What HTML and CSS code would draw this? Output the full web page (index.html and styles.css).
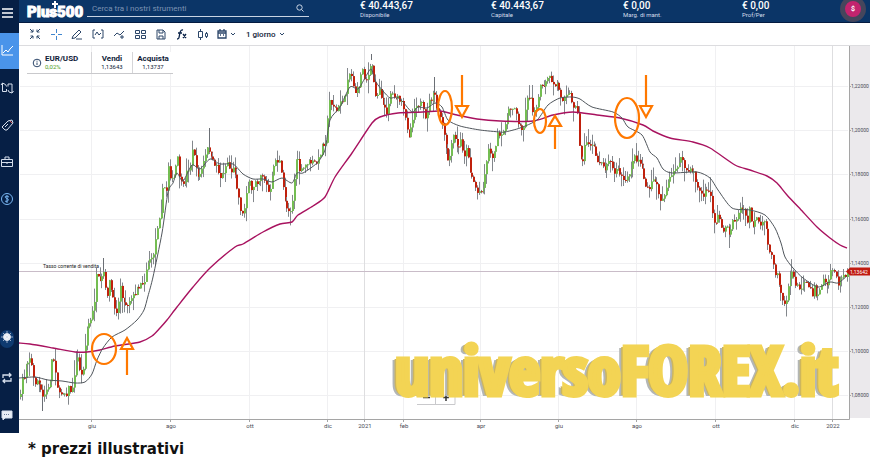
FILE: index.html
```html
<!DOCTYPE html>
<html lang="it">
<head>
    <meta charset="UTF-8">
    <meta name="viewport" content="width=device-width, initial-scale=1.0">
    <title>Plus500 - EUR/USD</title>
    <link rel="stylesheet" href="styles.css">
</head>
<body>

    <div class="app">
        <!-- Sidebar -->
        <nav class="sidebar">
            <button class="side-btn menu" aria-label="Menu"><svg width="14" height="14" viewBox="0 0 14 14"><path d="M2 3h11M2 7h11M2 11h11" stroke="#fff" stroke-width="1.3"/></svg></button>
            <button class="side-btn active" aria-label="Grafico"><svg width="14" height="14" viewBox="0 0 14 14"><path d="M2 1v10h11M3 9l3-3 2 2 2-3 3-3"/></svg></button>
            <button class="side-btn" aria-label="Ordini"><svg width="14" height="14" viewBox="0 0 14 14"><path d="M2.500 2v8.500h4V8M1 4l1.500-2 3 1.500 1 2M12 12V3H8v2.500M13.500 10L12 12l-3-1-1-2"/></svg></button>
            <button class="side-btn" aria-label="Posizioni"><svg width="14" height="14" viewBox="0 0 14 14"><path d="M2 9l6-6 4-1 1 3-6 7-2 0-3-3zM5 9l3-3"/><path d="M10 3l2 2" stroke="#e05a5a"/></svg></button>
            <button class="side-btn" aria-label="Portafoglio"><svg width="14" height="14" viewBox="0 0 14 14"><path d="M1.500 4.500h11v7h-11zM5 4V2h4v2M1 7.500h12M7 7v2"/></svg></button>
            <button class="side-btn fund" aria-label="Fondi"><svg width="14" height="14" viewBox="0 0 14 14"><circle cx="7" cy="7" r="5.500"/><path d="M9 5c-2-1-4-1-4 0s4 2 3.500 3S6 10 5 9M7 3v8"/></svg></button>
            <button class="side-btn theme" aria-label="Tema"><svg width="14" height="24" viewBox="0 0 14 24"><rect x="0" y="5" width="14" height="18" rx="7" fill="#0e3a70" stroke="none"/><circle cx="7" cy="12" r="3.500" fill="#fff"/><path d="M7 6v12M1 12h12M3 8l8 8M11 8l-8 8" stroke-width="0.700"/></svg></button>
            <button class="side-btn" aria-label="Cambia modalità"><svg width="14" height="14" viewBox="0 0 14 14"><path d="M3 7V4h8M9 2l2 2-2 2M11 7v3H3M5 8l-2 2 2 2" stroke-width="1.300"/></svg></button>
            <button class="side-btn" aria-label="Chat"><svg width="14" height="14" viewBox="0 0 14 14"><path d="M2 3h10v7H5l-2 2v-2H2z" fill="#e8edf5"/><path d="M4 6.500h6" stroke="#6b7c99" stroke-dasharray="1 1"/></svg></button>
        </nav>

        <div class="main">
            <!-- Header -->
            <header class="header">
                <div class="logo">Plus500<svg class="logo-plus" width="8" height="8" viewBox="0 0 8 8"><path d="M4 0v7M1 3h6" stroke="#fff" stroke-width="2"/></svg></div>
                <label class="search">
                    <input type="text" placeholder="Cerca tra i nostri strumenti" aria-label="Cerca tra i nostri strumenti">
                    <svg width="8" height="8" viewBox="0 0 8 8"><circle cx="3.500" cy="3.500" r="2.700"/><path d="M5.500 5.500l2 2"/></svg>
                </label>
                <dl class="metrics">
                    <div><dd>€ 40.443,67</dd><dt>Disponibile</dt></div>
                    <div><dd>€ 40.443,67</dd><dt>Capitale</dt></div>
                    <div><dd>€ 0,00</dd><dt>Marg. di mant.</dt></div>
                    <div><dd>€ 0,00</dd><dt>Prof/Per</dt></div>
                </dl>
                <button class="avatar">$</button>
            </header>

            <!-- Chart toolbar -->
            <div class="toolbar">
                <button aria-label="Riduci"><svg width="12" height="12" viewBox="0 0 12 12"><path d="M1 1l3 3M4 1.500V4H1.500M11 1L8 4M8 1.500V4h2.500M1 11l3-3M4 10.500V8H1.500M11 11L8 8M8 10.500V8h2.500"/></svg></button>
                <button aria-label="Mirino"><svg width="12" height="12" viewBox="0 0 12 12"><path d="M6.500 1v4M6.500 8v4M1 6.500h4M8 6.500h4" stroke="#3f86cf"/></svg></button>
                <button aria-label="Disegna"><svg width="12" height="12" viewBox="0 0 12 12"><path d="M2 8l6-6 2 2-6 6-3 .500zM5 11h6"/></svg></button>
                <button aria-label="Intervallo"><svg width="12" height="12" viewBox="0 0 12 12"><path d="M3 2H1v8h2M9 2h2v8H9M3 7l2-3 2 3 2-2"/></svg></button>
                <button aria-label="Tendenza"><svg width="12" height="12" viewBox="0 0 12 12"><path d="M1 8l3-3 3 2 4-4M7 9h4M9 7v4"/></svg></button>
                <button aria-label="Griglia"><svg width="12" height="12" viewBox="0 0 12 12"><path d="M1.500 2.500h4v3h-4zM7.500 2.500h4v3h-4zM1.500 7.500h4v3h-4zM7.500 7.500h4v3h-4z"/></svg></button>
                <button aria-label="Salva"><svg width="12" height="12" viewBox="0 0 12 12"><path d="M2 2h6l2 2v7H2zM4 2v3h4V2M4 11V8h4v3"/></svg></button>
                <button aria-label="Indicatori"><svg width="12" height="12" viewBox="0 0 12 12"><path d="M1 11c2 0 2-1 2.500-4S4.500 1.500 7 2M2 5h4M7 6l3 4M10 6l-3 4" stroke-width="1.300" stroke="#0b2348"/></svg></button>
                <button aria-label="Tipo di grafico"><svg width="12" height="12" viewBox="0 0 12 12"><path d="M1.500 3.500h4v6h-4zM3.500 1v2M3.500 10v2M8.500 5.500h2v3h-2zM9.500 4v1M9.500 9v1"/></svg></button>
                <button class="wide" aria-label="Calendario"><svg width="10" height="10" viewBox="0 0 10 10"><path d="M1 2h8v7H1zM1 4h8M3 0v2M7 0v2M3 6h1M6 6h1" stroke-width="1.300"/></svg><svg width="6" height="6" viewBox="0 0 6 6"><path d="M1 2l2 2 2-2"/></svg></button>
                <button class="period">1 giorno <svg width="6" height="6" viewBox="0 0 6 6"><path d="M1 2l2 2 2-2"/></svg></button>
            </div>

            <!-- Chart -->
            <main class="chart-area">
                <svg id="chart" class="chart" viewBox="19 46 851 387"></svg>
                <div class="quote">
                    <div class="instrument">
                        <svg width="10" height="10" viewBox="0 0 10 10"><circle cx="5" cy="5" r="3.800"/><path d="M5 4.500V7M5 2.700v1"/></svg>
                        <div><strong>EUR/USD</strong><span class="change">0,02%</span></div>
                    </div>
                    <div class="side"><strong>Vendi</strong><span>1,13643</span></div>
                    <div class="side"><strong>Acquista</strong><span>1,13737</span></div>
                </div>
                <div class="watermark">universoFOREX.it</div>
            </main>
        </div>
    </div>

    <p class="note">* prezzi illustrativi</p>

    <script src="chart.js"></script>
</body>
</html>
```

FILE: styles.css
```css
/* General Reset */
* { margin: 0; padding: 0; box-sizing: border-box; }
body { font-family: Roboto, sans-serif; background-color: #fff; color: #101c38; }
button { font: inherit; color: inherit; background: none; border: none; cursor: pointer; }
svg { display: block; fill: none; }

.app { display: flex; }
.main { flex: 1; min-width: 0; }

/* Sidebar */
.sidebar { display: flex; flex-direction: column; width: 19px; background-color: #061f45; }
.side-btn { display: flex; align-items: center; height: 37px; width: 100%; }
.side-btn svg { stroke: #d5deec; }
.menu { height: 33px; padding-bottom: 7px; }
.active { height: 36px; background-color: #4a94ea; }
.active svg { stroke: #fff; }
.fund svg { stroke: #7ab8f5; }
.theme { height: 45px; margin-top: auto; }

/* Header */
.header { display: flex; height: 23px; padding-left: 7px; background-color: #0b3567; border-bottom: 1px solid #041b40; overflow: hidden; }
.logo { position: relative; width: 61px; padding: 4px 0 0 1px; font-size: 15px; line-height: 17px; font-weight: 900; color: #fff; -webkit-text-stroke: 1px #fff; }
.logo-plus { position: absolute; left: 25px; top: 1px; }
.search { display: flex; align-items: center; width: 222px; height: 17px; border-bottom: 1px solid #c8d3e2; }
.search input { flex: 1; min-width: 0; padding-left: 5px; border: none; outline: none; background: none; font: 8px Roboto, sans-serif; color: #fff; }
.search input::placeholder { color: #7c93b3; opacity: 1; }
.search svg { margin-right: 5px; stroke: #c8d3e2; }
.metrics { flex: 1; display: grid; grid-template-columns: 131fr 132fr 119fr 98fr; margin-left: 51px; color: #fff; }
.metrics div { display: flex; flex-direction: column; }
.metrics dd { font-size: 10px; line-height: 11px; font-weight: 500; }
.metrics dt { font-size: 6px; line-height: 8px; color: #d5deec; }
.avatar { flex: none; width: 26px; height: 26px; margin: -4px 4px 0 0; border-radius: 50%; border: 5px solid #45465c; background-color: #c2246e; color: #fff; font-size: 7px; font-weight: 700; }

/* Toolbar */
.toolbar { display: flex; align-items: center; height: 23px; padding-left: 5px; border-bottom: 1px solid #dcdcdf; }
.toolbar button { display: flex; align-items: center; justify-content: center; width: 21px; height: 22px; }
.toolbar svg { stroke: #2c4669; }
.toolbar .wide { width: 27px; gap: 3px; }
.toolbar .period { width: auto; margin-left: 6px; gap: 4px; font-size: 8px; font-weight: 500; }

/* Chart */
.chart-area { position: relative; }
.chart { width: 100%; }
.chart text { font-family: Roboto, sans-serif; fill: #4a4a55; }
.month { font-size: 6px; text-anchor: middle; }
.price { font-size: 5px; }
.chart .rate-label { font-size: 5px; fill: #222; }
.chart .tag-text { font-size: 5px; fill: #fff; }
.grid { stroke: #f0f0f2; stroke-width: 1; }
.grid-year { stroke: #dedee0; }
.axis { stroke: #a5a5a5; }
.ma-fast { stroke: #50565c; stroke-width: 1; stroke-linejoin: round; }
.ma-slow { stroke: #a8125f; stroke-width: 1.400; stroke-linejoin: round; }
.mark { stroke: #ff7800; stroke-width: 2.200; }

/* Quote panel */
.quote { position: absolute; left: 8px; top: 6px; display: flex; height: 22px; background-color: #fff; border-bottom: 1px solid #c9c9cc; line-height: 8px; }
.quote strong, .quote span { display: block; }
.quote strong { padding-top: 3px; font-size: 8px; font-weight: 700; }
.quote span { font-size: 6px; }
.instrument { display: flex; align-items: center; gap: 3px; width: 64px; padding-left: 5px; }
.instrument svg { stroke: #2c4669; }
.instrument div { align-self: flex-start; }
.quote .change { color: #4ea01c; }
.side { width: 41px; border-left: 1px solid #d5d5d8; text-align: center; }

/* Watermark */
.watermark { position: absolute; right: 32px; bottom: 30px; font-family: "Open Sans Condensed", "Roboto Condensed", sans-serif; font-size: 67px; line-height: 67px; font-weight: 800; color: #f3d454; -webkit-text-stroke: 5px #f3d454; white-space: nowrap; text-shadow: -2px 0 #cdb65e, -4px 0 #cdb65e, -6px 1px #b3b6b5; }

/* Footer note */
.note { padding: 7px 28px; font-family: "DejaVu Sans", sans-serif; font-size: 15px; line-height: 18px; font-weight: 700; color: #111; }
```

FILE: chart.js
```js
const svg = document.getElementById('chart');
const out = [];

// Closing level along the time axis
const path = [
    [20,397],[22,376],[23,384],[25,364],[30,356],[32,374],[34,384],[37,380],[41,394],[43,400],[45,390],[49,388],[51,360],[54,360],[57,386],[59,396],[62,391],[66,394],[69,385],[71,397],[74,370],[77,356],[80,373],[82,378],[84,352],[87,325],[91,320],[94,300],[96,275],
    [100,285],[103,270],[106,299],[109,281],[113,303],[117,312],[120,284],[123,303],[127,304],[131,296],[135,296],[137,281],[139,290],[141,277],[143,287],[146,267],[149,258],[152,261],[155,240],[158,218],[161,209],[163,184],[166,192],[168,165],[171,182],[174,175],[177,157],[180,183],[183,187],[187,170],[190,166],[193,145],[196,173],[199,176],[203,163],[206,152],[208,146],[211,161],[216,165],[220,178],[224,170],[227,161],[230,172],[234,168],[237,190],[241,214],[243,215],[246,188],[249,182],[252,195],[254,179],[258,182],[261,172],[265,182],[269,196],[272,175],[274,160],[279,162],[283,190],[286,208],
    [291,210],[296,155],[300,173],[307,162],[317,163],[322,143],[325,143],[329,100],[337,112],[340,101],[345,98],[348,72],[352,77],[354,93],[358,88],[362,67],[365,81],[369,73],[371,60],[373,81],[376,98],[379,87],[383,107],[386,113],[390,93],[396,97],[401,103],[405,120],[409,137],[411,123],[415,103],[422,105],[425,121],[428,103],[434,93],[437,112],[440,117],[443,130],[445,148],[448,163],[453,135],[458,150],[461,137],[463,157],[467,147],[469,170],[472,178],[477,193],
    [483,187],[486,160],[488,150],[493,157],[497,135],[502,138],[504,123],[509,110],[515,105],[517,125],[523,128],[527,95],[530,97],[533,113],[537,102],[541,82],[543,90],[548,75],[552,87],[557,83],[561,102],[565,92],[569,92],[572,107],[576,102],[578,132],[579,153],[582,162],[585,142],[588,143],[593,147],[597,162],[602,160],[604,175],[607,158],[611,160],[613,178],[616,167],[620,175],[625,183],[629,173],[633,157],[638,160],[642,168],[644,183],[648,192],[653,177],[657,188],[661,202],
    [667,183],[672,175],[677,165],[680,157],[683,165],[687,172],[693,170],[697,188],[703,197],[706,188],[710,197],[713,220],[715,223],[718,215],[722,230],[725,227],[729,233],[732,222],[736,218],[740,208],[744,212],[747,222],[750,202],[751,228],[757,218],[759,228],[765,220],[767,245],[772,255],[774,280],[777,270],[779,287],[785,307],[788,283],[792,273],[795,283],[800,292],[803,278],[808,285],[812,295],[813,280],[816,298],[820,285],[823,280],[827,283],[832,268],[835,273],[837,287],[842,273],[844,278],[847,272]
];

const slow = [[19,343],[30,344],[53,348],[75,352],[87,352],[100,350],[115,346],[140,342],[152,336],[160,328],[167,320],[177,307],[193,287],[210,268],[235,247],[243,244],[263,232],[280,224],[292,222],[298,215],[313,206],[325,197],[335,177],[352,153],[372,123],[380,117],[398,113],[423,112],[440,111],[457,115],[477,119],[500,121],[533,121],[553,115],[573,112],[597,115],[620,118],[643,125],[653,131],[670,138],[693,142],[710,148],[735,165],[750,170],[767,176],[777,183],[787,195],[803,212],[817,227],[830,238],[840,245],[847,248]];

const fast = [[19,378],[35,377],[48,380],[62,381],[75,383],[85,382],[92,374],[97,360],[103,348],[112,337],[125,330],[137,320],[144,310],[148,296],[153,277],[162,233],[168,192],[173,183],[177,173],[183,181],[192,165],[200,169],[210,159],[220,164],[233,164],[243,174],[253,179],[263,179],[272,182],[282,178],[292,183],[297,173],[303,173],[317,163],[325,150],[330,120],[340,107],[350,87],[358,89],[365,78],[371,69],[376,82],[383,91],[390,98],[397,97],[403,102],[412,112],[418,107],[427,108],[435,103],[442,107],[448,120],[460,126],[480,130],[500,132],[505,132],[520,128],[537,120],[548,105],[560,98],[572,97],[580,99],[592,107],[613,112],[622,118],[628,127],[642,135],[650,152],[657,158],[663,169],[672,173],[697,172],[710,178],[718,190],[732,208],[750,210],[765,215],[775,228],[781,243],[785,257],[793,268],[803,278],[818,287],[830,282],[838,283],[847,276]];

const months = [[92,'giu'],[171,'ago'],[250,'ott'],[328,'dic'],[365,'2021'],[404,'feb'],[481,'apr'],[559,'giu'],[637,'ago'],[716,'ott'],[795,'dic'],[833,'2022']];
const prices = ['1,22000','1,20000','1,18000','1,16000','1,14000','1,12000','1,10000','1,08000'];

function levelAt(x) {
    let i = 1;
    while (i < path.length - 1 && path[i][0] < x) i++;
    const [x0, y0] = path[i - 1];
    const [x1, y1] = path[i];
    return y0 + (y1 - y0) * (x - x0) / (x1 - x0);
}

let seed = 7;
function rand() {
    seed = (seed * 16807) % 2147483647;
    return seed / 2147483647;
}

// Smooth line through the given points
function curve(list) {
    let d = `M${list[0]}`;
    for (let i = 0; i < list.length - 1; i++) {
        const a = list[i - 1] || list[i];
        const b = list[i];
        const c = list[i + 1];
        const e = list[i + 2] || c;
        d += `C${b[0] + (c[0] - a[0]) / 8} ${b[1] + (c[1] - a[1]) / 8} ${c[0] - (e[0] - b[0]) / 8} ${c[1] - (e[1] - b[1]) / 8} ${c[0]} ${c[1]}`;
    }
    return d;
}

// Price scale background and grid
out.push('<rect x="850" y="46" width="20" height="372" fill="#ebe9ec"/>');
prices.forEach((p, i) => {
    const y = Math.round(86 + i * 44.2) + 0.5;
    out.push(`<path class="grid" d="M20 ${y}H848"/><path class="axis" d="M849 ${y}h2"/><text class="price" x="851" y="${y + 1.5}">${p}</text>`);
});
months.forEach(([x, name]) => {
    const year = name.startsWith('20');
    out.push(`<path class="grid ${year ? 'grid-year' : ''}" d="M${x - 0.5} 46V419"/><path class="axis" d="M${x - 0.5} 419v3"/><text class="month" x="${x}" y="428">${name}</text>`);
});
out.push('<path class="axis" d="M19 419.500H849.500V46"/>');

// Current sell rate
out.push('<path d="M19 271.500H849" stroke="#c9bcc8"/><text class="rate-label" x="43" y="268">Tasso corrente di vendita</text>');

// Candles
let prev = levelAt(20);
for (let x = 20; x < 847; x += 1.85) {
    const close = levelAt(x) + (rand() - 0.5) * 6;
    const top = Math.min(prev, close);
    const bottom = Math.max(prev, close);
    const px = Math.round(x);
    const high = top - rand() * rand() * 16;
    const low = bottom + rand() * rand() * 16;
    out.push(`<path d="M${px + 0.5} ${high.toFixed(1)}V${low.toFixed(1)}" stroke="#83878c"/>`);
    out.push(`<rect x="${px}" y="${top.toFixed(1)}" width="2" height="${Math.max(1, bottom - top).toFixed(1)}" fill="${close > prev ? '#c0200c' : '#74bd52'}"/>`);
    prev = close;
}
[[209,128],[371,54],[434,77],[42,411],[103,258]].forEach(([x, y]) => out.push(`<path d="M${x}.5 ${y}V${levelAt(x)}" stroke="#6b6f75"/>`));

// Moving averages
out.push(`<path class="ma-slow" d="${curve(slow)}"/>`);
out.push(`<path class="ma-fast" d="${curve(fast)}"/>`);

// Crossings
[[104,349,12,15],[445,108,7,17],[540,121,6,12],[627,118,12,20]].forEach(([x, y, rx, ry]) => {
    out.push(`<ellipse class="mark" cx="${x}" cy="${y}" rx="${rx}" ry="${ry}"/>`);
});
// x, tail, base of the head, tip
[[127,375,349,338],[462,75,106,117],[555,149,126,116],[646,75,106,117]].forEach(([x, tail, base, tip]) => {
    out.push(`<path class="mark" d="M${x} ${tail}V${base}M${x - 6} ${base}h12L${x} ${tip}z"/>`);
});

// Zoom control behind the watermark
out.push('<path d="M417 404.500h38V396M435.500 396v8" stroke="#c9c9cc"/><path d="M423 397.500h7M443 397.500h6M446 394v7" stroke="#333" stroke-width="1.500"/>');

// Price tag
out.push('<path d="M846 271.500l4-4h20v8h-20z" fill="#c01a10"/><text class="tag-text" x="850" y="273.500">1,13642</text>');

svg.innerHTML = out.join('');
```
